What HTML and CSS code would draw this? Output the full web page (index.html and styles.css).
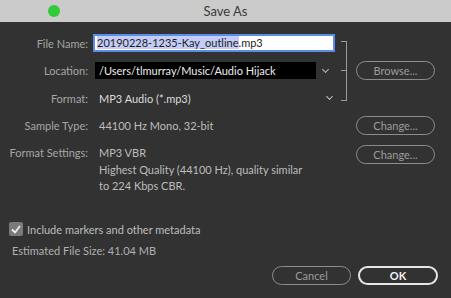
FILE: index.html
```html
<!DOCTYPE html>
<html lang="en">

<head>
    <meta charset="UTF-8">
    <title>Save As</title>
    <link rel="stylesheet" href="styles.css">
</head>

<body>
    <div class="titlebar">
        <span class="dot"></span>
        <span class="title">Save As</span>
        <span></span>
    </div>

    <div class="form">
        <label class="label">File Name:</label>
        <div class="field">
            <div class="input"><span class="sel">20190228-1235-Kay_outline</span>.mp3</div>
        </div>
        <div class="bracket"><span class="tick"></span></div>

        <label class="label">Location:</label>
        <div class="field select">
            <div class="path">/Users/tlmurray/Music/Audio Hijack</div>
            <span class="chev"></span>
        </div>
        <button class="btn side">Browse...</button>

        <label class="label">Format:</label>
        <div class="field select">
            <div class="plain">MP3 Audio (*.mp3)</div>
            <span class="chev"></span>
        </div>

        <label class="label">Sample Type:</label>
        <div class="field value">44100 Hz Mono, 32-bit</div>
        <button class="btn side">Change...</button>

        <label class="label top">Format Settings:</label>
        <div class="field value multi">MP3 VBR<br>Highest Quality (44100 Hz), quality similar<br>to 224 Kbps CBR.</div>
        <button class="btn side top-btn">Change...</button>
    </div>

    <div class="extras">
        <div class="check-row">
            <span class="checkbox">
                <svg width="10" height="9" viewBox="0 0 10 9"><path d="M1 4.5 L4 7.5 L9 1" fill="none" stroke="#eee" stroke-width="1.8"/></svg>
            </span>
            <span>Include markers and other metadata</span>
        </div>
        <div class="size">Estimated File Size: 41.04 MB</div>
    </div>

    <div class="actions">
        <button class="btn">Cancel</button>
        <button class="btn primary">OK</button>
    </div>
</body>

</html>
```

FILE: styles.css
```css
body {
    margin: 0;
    background-color: #323232;
    font-family: Lato, sans-serif;
    font-size: 11px;
    color: #c4c4c4;
    height: 298px;
    overflow: hidden;
}

.titlebar {
    height: 22px;
    background-color: #cbcbcb;
    display: grid;
    grid-template-columns: 1fr auto 1fr;
    align-items: center;
    padding: 0 48px;
}

.dot {
    width: 12px;
    height: 12px;
    border-radius: 50%;
    background-color: #2fcb3a;
}

.title {
    color: #3a3a3a;
    font-size: 13px;
}

.form {
    display: grid;
    grid-template-columns: 88px 247px 21px 79px;
    grid-auto-rows: 22px;
    row-gap: 5.5px;
    align-items: center;
    padding-top: 10px;
}

.label {
    grid-column: 1;
    text-align: right;
    white-space: nowrap;
    color: #a6a6a6;
}

.label.top {
    align-self: start;
    line-height: 16.5px;
    padding-top: 3px;
}

.field {
    grid-column: 2;
    margin-left: 5px;
}

.input {
    height: 14px;
    line-height: 14px;
    border: 2px solid #5b8de8;
    background-color: #ffffff;
    color: #1e1e1e;
    padding: 0 2px;
    font-size: 11px;
}

.sel {
    background-color: #c4cdf6;
}

.select {
    display: flex;
    align-items: center;
}

.path {
    width: 221px;
    margin-left: 2px;
    height: 17px;
    line-height: 17px;
    background-color: #000000;
    color: #ececec;
    font-size: 11px;
    padding-left: 4px;
    box-sizing: border-box;
}

.plain {
    width: 221px;
    margin-left: 2px;
    padding-left: 4px;
    color: #dcdcdc;
}

.chev {
    width: 4px;
    height: 4px;
    border-right: 1px solid #bbb;
    border-bottom: 1px solid #bbb;
    transform: rotate(45deg);
    margin-left: 7px;
    margin-top: -3px;
}

.value {
    padding-left: 6px;
    color: #bdbdbd;
}

.multi {
    align-self: start;
    line-height: 16.5px;
    padding-top: 3px;
}

.bracket {
    grid-row: 1 / span 3;
    grid-column: 3;
    align-self: start;
    margin-top: 9px;
    margin-left: 6px;
    width: 5px;
    height: 58px;
    border: 1px solid #9a9a9a;
    border-left: none;
    position: relative;
}

.tick {
    position: absolute;
    left: 0;
    top: 28px;
    width: 5px;
    border-top: 1px solid #9a9a9a;
}

.btn {
    height: 19px;
    padding: 0;
    border: 1px solid #8c8c8c;
    border-radius: 10px;
    background-color: transparent;
    color: #9c9c9c;
    font-family: inherit;
    font-size: 11px;
    width: 79px;
}

.side {
    grid-column: 4;
}

.top-btn {
    align-self: start;
    margin-top: 3px;
}

.extras {
    padding-left: 9px;
    margin-top: 58px;
}

.check-row {
    display: flex;
    align-items: center;
    gap: 4px;
    color: #bdbdbd;
}

.checkbox {
    width: 14px;
    height: 14px;
    background-color: #7a7a7a;
    border-radius: 2px;
    display: flex;
    align-items: center;
    justify-content: center;
}

.size {
    margin-top: 8px;
    padding-left: 3px;
    color: #b0b0b0;
}

.actions {
    display: flex;
    justify-content: flex-end;
    gap: 7px;
    padding-right: 13px;
    margin-top: 9px;
}

.btn.primary {
    border: 2px solid #e6e6e6;
    color: #f4f4f4;
    font-weight: bold;
    width: 80px;
}
```
